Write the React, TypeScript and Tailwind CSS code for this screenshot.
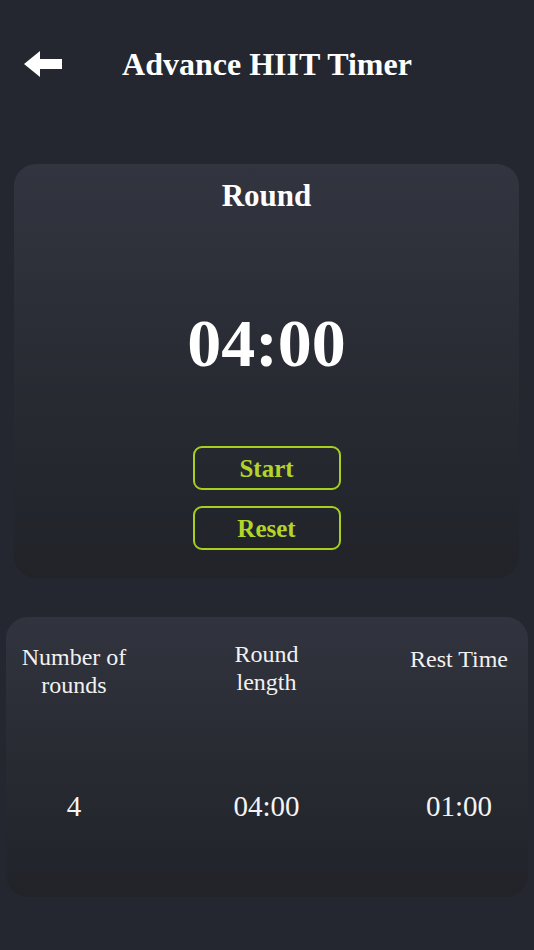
import React from "react";

const serif = { fontFamily: '"Liberation Serif", "DejaVu Serif", serif' };

function BackArrow() {
  return (
    <svg width="38" height="26" viewBox="0 0 38 26" className="block">
      <polygon points="0,13 16,0 16,8 38,8 38,18 16,18 16,26" fill="#ffffff" />
    </svg>
  );
}

function OutlineButton({ label }: { label: string }) {
  return (
    <button className="w-[148px] h-[44px] rounded-[9px] border-2 border-[#a6cf1f] text-[#b2d52a] text-[25px] font-bold leading-none flex items-center justify-center">
      {label}
    </button>
  );
}

const stats = [
  { label: ["Number of", "rounds"], value: "4", offset: "mt-[2px]" },
  { label: ["Round", "length"], value: "04:00", offset: "-mt-[1px]" },
  { label: ["Rest Time"], value: "01:00", offset: "mt-[4px]" },
];

export default function App() {
  return (
    <div className="w-[534px] h-[950px] bg-[#24272f] overflow-hidden" style={serif}>
      {/* header */}
      <div className="grid grid-cols-[1fr_auto_1fr] items-center pt-[40px] h-[88px]">
        <div className="pl-[24px]">
          <BackArrow />
        </div>
        <h1 className="text-[32px] leading-[40px] font-bold text-white">Advance HIIT Timer</h1>
        <div />
      </div>

      {/* timer card */}
      <div className="ml-[14px] mr-[15px] mt-[76px] h-[414px] rounded-[22px] bg-gradient-to-b from-[#32343f] to-[#212329] flex flex-col items-center">
        <div className="mt-[14px] text-[31px] leading-[36px] font-bold text-white">Round</div>
        <div className="mt-[95px] text-[68px] leading-[68px] font-bold text-white">04:00</div>
        <div className="mt-[69px] flex flex-col gap-[16px]">
          <OutlineButton label="Start" />
          <OutlineButton label="Reset" />
        </div>
      </div>

      {/* settings card */}
      <div className="mx-[6px] mt-[39px] h-[280px] rounded-[22px] bg-gradient-to-b from-[#31333e] to-[#212329] pl-[8px] pr-[9px] pt-[24px]">
        <div className="flex justify-between">
          {stats.map((s) => (
            <div
              key={s.value + s.label[0]}
              className={`w-[120px] text-center text-[24px] leading-[28px] text-[#f1f1f1] ${s.offset}`}
            >
              {s.label.map((line) => (
                <div key={line}>{line}</div>
              ))}
            </div>
          ))}
        </div>
        <div className="flex justify-between mt-[92px]">
          {stats.map((s) => (
            <div key={s.value + "v"} className="w-[120px] text-center text-[29px] leading-[30px] text-[#f4f4f4]">
              {s.value}
            </div>
          ))}
        </div>
      </div>
    </div>
  );
}
